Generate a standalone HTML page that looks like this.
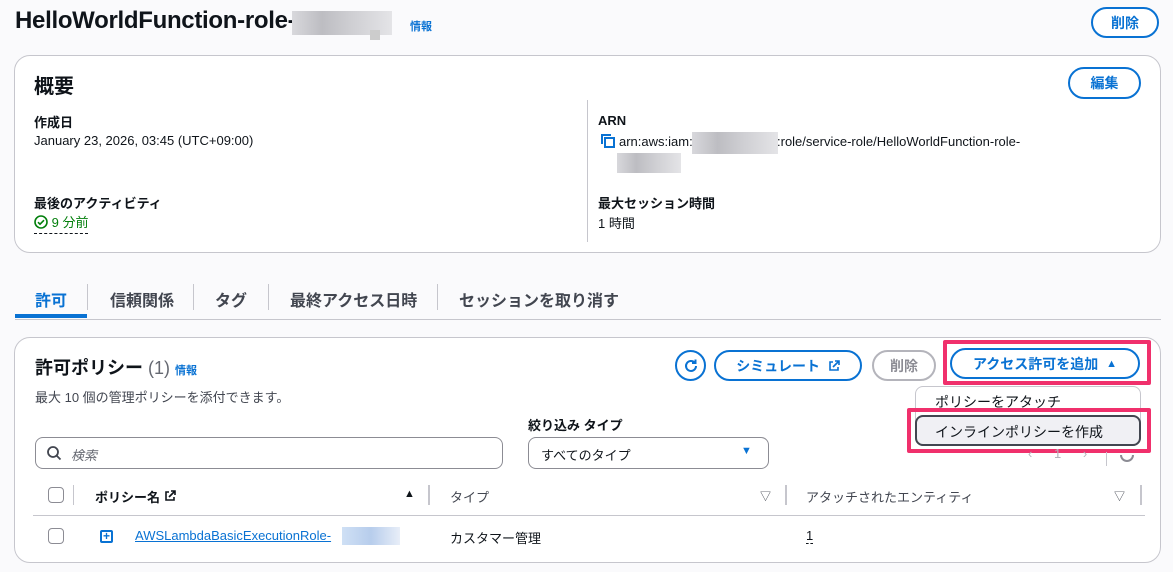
<!DOCTYPE html>
<html><head><meta charset="utf-8"><style>
*{box-sizing:border-box;margin:0;padding:0}
body{width:1173px;height:572px;overflow:hidden;background:#fafafc;font-family:"Liberation Sans","Noto Sans CJK JP",sans-serif;color:#0f141a;position:relative;font-size:13px}
.a{position:absolute;white-space:nowrap}
.card{position:absolute;background:#fff;border:1px solid #c6c6cd;border-radius:16px}
.btn{position:absolute;border:2px solid #0972d3;border-radius:20px;color:#0972d3;font-weight:bold;font-size:14px;display:flex;align-items:center;justify-content:center;background:#fff}
.b{font-weight:bold}
.blur{position:absolute;background:linear-gradient(90deg,#d8d8dc,#bdbdc2 30%,#cfcfd3 60%,#e4e4e7);}
.sep{position:absolute;width:2px;background:#c6c6cd}
.cb{position:absolute;width:16px;height:16px;border:1px solid #8c8c94;border-radius:4px;background:#fff}
</style></head><body>
<div class="a b" style="left:15px;top:7px;font-size:24px;letter-spacing:-0.3px">HelloWorldFunction-role-</div>
<div class="blur" style="left:292px;top:11px;width:100px;height:24px"></div>
<div class="blur" style="left:370px;top:30px;width:10px;height:10px;background:#ccc"></div>
<div class="a b" style="left:410px;top:18px;font-size:11px;color:#0972d3">情報</div>
<div class="btn" style="left:1091px;top:7px;width:68px;height:31px">削除</div>

<div class="card" style="left:14px;top:55px;width:1147px;height:198px"></div>
<div class="a b" style="left:34px;top:70px;font-size:20px">概要</div>
<div class="btn" style="left:1068px;top:67px;width:73px;height:32px">編集</div>
<div class="a b" style="left:34px;top:112px">作成日</div>
<div class="a" style="left:34px;top:133px">January 23, 2026, 03:45 (UTC+09:00)</div>
<div class="a b" style="left:34px;top:193px">最後のアクティビティ</div>
<div class="a" style="left:34px;top:212px;color:#037f0c;border-bottom:1px dashed #0f141a;padding-bottom:2px">
<svg width="14" height="14" viewBox="0 0 14 14" style="vertical-align:-2px"><circle cx="7" cy="7" r="6" fill="none" stroke="#037f0c" stroke-width="1.6"/><path d="M4 7.2l2 2 4-4" fill="none" stroke="#037f0c" stroke-width="1.6"/></svg> 9 分前</div>
<div class="sep" style="left:587px;top:100px;height:142px;width:1px"></div>
<div class="a b" style="left:598px;top:113px">ARN</div>
<svg class="a" style="left:600px;top:133px" width="16" height="16" viewBox="0 0 16 16"><path d="M2 11V2h9" fill="none" stroke="#0972d3" stroke-width="2"/><rect x="5" y="5" width="9" height="9" fill="none" stroke="#0972d3" stroke-width="2"/></svg>
<div class="a" style="left:619px;top:134px">arn:aws:iam::</div>
<div class="blur" style="left:692px;top:132px;width:86px;height:22px"></div>
<div class="a" style="left:777px;top:134px">:role/service-role/HelloWorldFunction-role-</div>
<div class="blur" style="left:617px;top:153px;width:64px;height:20px"></div>
<div class="a b" style="left:598px;top:193px">最大セッション時間</div>
<div class="a" style="left:598px;top:213px">1 時間</div>

<div class="a b" style="left:35px;top:287px;font-size:16px;color:#0972d3">許可</div>
<div class="a" style="left:15px;top:314px;width:72px;height:4px;background:#0972d3"></div>
<div class="sep" style="left:87px;top:284px;height:26px;width:1px"></div>
<div class="a b" style="left:110px;top:287px;font-size:16px;color:#424650">信頼関係</div>
<div class="sep" style="left:193px;top:284px;height:26px;width:1px"></div>
<div class="a b" style="left:215px;top:287px;font-size:16px;color:#424650">タグ</div>
<div class="sep" style="left:268px;top:284px;height:26px;width:1px"></div>
<div class="a b" style="left:290px;top:287px;font-size:16px;color:#424650">最終アクセス日時</div>
<div class="sep" style="left:437px;top:284px;height:26px;width:1px"></div>
<div class="a b" style="left:459px;top:287px;font-size:16px;color:#424650">セッションを取り消す</div>
<div class="a" style="left:15px;top:319px;width:1146px;height:1px;background:#c6c6cd"></div>

<div class="card" style="left:14px;top:337px;width:1147px;height:226px"></div>
<div class="a b" style="left:35px;top:354px;font-size:18px">許可ポリシー <span style="font-weight:normal;color:#656871">(1)</span> <span style="font-size:11px;color:#0972d3">情報</span></div>
<div class="a" style="left:35px;top:387px;color:#424650">最大 10 個の管理ポリシーを添付できます。</div>

<div class="btn" style="left:675px;top:350px;width:31px;height:31px;border-radius:50%"><svg width="16" height="16" viewBox="0 0 16 16"><path d="M13 8a5 5 0 1 1-1.5-3.6" fill="none" stroke="#0972d3" stroke-width="2"/><path d="M12.5 1.5v3.5H9" fill="none" stroke="#0972d3" stroke-width="2"/></svg></div>
<div class="btn" style="left:714px;top:350px;width:148px;height:31px">シミュレート&nbsp;&nbsp;<svg width="12" height="12" viewBox="0 0 12 12"><path d="M5 2H2v8h8V7M7 1h4v4M11 1L5 7" fill="none" stroke="#0972d3" stroke-width="1.6"/></svg></div>
<div class="btn" style="left:872px;top:350px;width:64px;height:31px;border-color:#b4b4bb;color:#8c8c94">削除</div>
<div class="a" style="left:943px;top:340px;width:208px;height:45px;border:4px solid #f0306c;border-radius:2px"></div>
<div class="btn" style="left:950px;top:348px;width:190px;height:31px">アクセス許可を追加&nbsp;&nbsp;<span style="font-size:11px">▲</span></div>

<div class="a" style="left:915px;top:386px;width:226px;height:60px;background:#fff;border:1px solid #c6c6cd;border-radius:8px"></div>
<div class="a" style="left:935px;top:392px;color:#0f141a;font-size:14px">ポリシーをアタッチ</div>
<div class="a" style="left:907px;top:408px;width:244px;height:45px;border:4px solid #f0306c;border-radius:2px"></div>
<div class="a" style="left:915px;top:415px;width:226px;height:31px;background:#f0f0f4;border:2px solid #424650;border-radius:8px"></div>
<div class="a" style="left:935px;top:422px;font-size:14px">インラインポリシーを作成</div>

<div class="a b" style="left:528px;top:415px">絞り込み タイプ</div>
<div class="a" style="left:35px;top:437px;width:468px;height:32px;border:1px solid #8c8c94;border-radius:8px;background:#fff"></div>
<svg class="a" style="left:46px;top:445px" width="16" height="16" viewBox="0 0 16 16"><circle cx="7" cy="7" r="5" fill="none" stroke="#424650" stroke-width="1.8"/><path d="M10.5 10.5l4 4" stroke="#424650" stroke-width="1.8"/></svg>
<div class="a" style="left:71px;top:445px;font-style:italic;color:#656871">検索</div>
<div class="a" style="left:528px;top:437px;width:241px;height:32px;border:1px solid #8c8c94;border-radius:8px;background:#fff"></div>
<div class="a" style="left:541px;top:445px">すべてのタイプ</div>
<div class="a" style="left:741px;top:445px;font-size:11px;color:#0972d3">▼</div>
<div class="a" style="left:1028px;top:446px;color:#b4b4bb">‹&nbsp;&nbsp;&nbsp;&nbsp;&nbsp;&nbsp;1&nbsp;&nbsp;&nbsp;&nbsp;&nbsp;&nbsp;›</div>
<div class="sep" style="left:1106px;top:452px;height:14px;width:1px"></div>
<div class="a" style="left:1120px;top:448px;width:14px;height:14px;border:2px solid #8c8c94;border-radius:50%;clip-path:inset(50% 0 0 0)"></div>

<div class="cb" style="left:48px;top:487px"></div>
<div class="sep" style="left:73px;top:485px;height:20px;width:1px"></div>
<div class="a b" style="left:95px;top:487px">ポリシー名 <svg width="12" height="12" viewBox="0 0 12 12"><path d="M5 2H2v8h8V7M7 1h4v4M11 1L5 7" fill="none" stroke="#0f141a" stroke-width="1.6"/></svg></div>
<div class="a" style="left:404px;top:488px;font-size:11px">▲</div>
<div class="sep" style="left:428px;top:485px;height:20px"></div>
<div class="a" style="left:450px;top:487px;color:#424650">タイプ</div>
<div class="a" style="left:760px;top:488px;font-size:11px;color:#424650">▽</div>
<div class="sep" style="left:785px;top:485px;height:20px"></div>
<div class="a" style="left:806px;top:487px;color:#424650">アタッチされたエンティティ</div>
<div class="a" style="left:1114px;top:488px;font-size:11px;color:#424650">▽</div>
<div class="sep" style="left:1140px;top:485px;height:20px"></div>
<div class="a" style="left:33px;top:515px;width:1112px;height:1px;background:#c6c6cd"></div>

<div class="cb" style="left:48px;top:528px"></div>
<div class="a" style="left:100px;top:530px;width:13px;height:13px;border:2px solid #0972d3;border-radius:2px;color:#0972d3;font-size:12px;line-height:9px;text-align:center;font-weight:bold">+</div>
<div class="a" style="left:135px;top:528px;color:#0972d3;text-decoration:underline">AWSLambdaBasicExecutionRole-</div>
<div class="blur" style="left:342px;top:527px;width:58px;height:18px;background:linear-gradient(90deg,#cfe0f5,#b7cdec 50%,#e8eef8)"></div>
<div class="a" style="left:450px;top:528px">カスタマー管理</div>
<div class="a" style="left:806px;top:528px;border-bottom:1px dashed #0f141a">1</div>
</body></html>
